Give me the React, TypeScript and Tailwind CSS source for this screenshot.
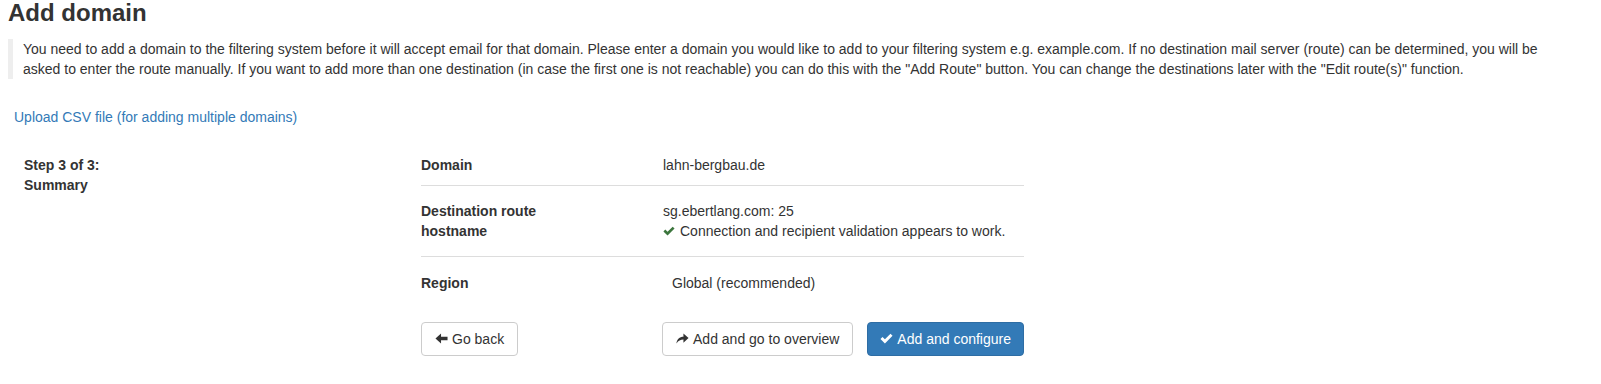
import React from "react";

const ArrowLeft = () => (
  <svg width="13" height="13" viewBox="0 0 14 14" className="inline-block">
    <path d="M0.5 7 L6.5 1.5 L6.5 5 L13.5 5 L13.5 9 L6.5 9 L6.5 12.5 Z" fill="#333" />
  </svg>
);

const ShareAlt = () => (
  <svg width="13" height="13" viewBox="0 0 14 14" className="inline-block">
    <path d="M0.5 12.5 C0.8 7.5 4 5 8 5 L8 1.5 L13.5 6.5 L8 11.5 L8 8.2 C5 8.2 2.5 9.3 0.5 12.5 Z" fill="#333" />
  </svg>
);

const Check = ({ color, size }: { color: string; size: number }) => (
  <svg width={size} height={size} viewBox="0 0 14 14" className="inline-block">
    <path d="M0.5 7.5 L2.7 5.3 L5.3 7.9 L11.3 1.9 L13.5 4.1 L5.3 12.3 Z" fill={color} />
  </svg>
);

export default function App() {
  return (
    <div className="bg-white pl-2 pr-2 font-['Liberation_Sans',Arial,sans-serif] text-[14px] leading-5 text-[#333]">
      <h3 className="m-0 text-[24px] font-bold leading-[1.1] text-[#333]">Add domain</h3>
      <blockquote className="mt-[12.6px] border-l-[5px] border-[#eee] pl-[10px] pr-[20px]">
        You need to add a domain to the filtering system before it will accept email for that domain. Please enter a
        domain you would like to add to your filtering system e.g. example.com. If no destination mail server (route)
        can be determined, you will be asked to enter the route manually. If you want to add more than one destination
        (in case the first one is not reachable) you can do this with the "Add Route" button. You can change the
        destinations later with the "Edit route(s)" function.
      </blockquote>
      <div className="mt-[28px] pl-[6px]">
        <a className="text-[#337ab7] no-underline" href="#">
          Upload CSV file (for adding multiple domains)
        </a>
      </div>
      <div className="mt-[28px] flex">
        <div className="w-[413px] shrink-0 pl-[16px] font-bold">
          <div>Step 3 of 3:</div>
          <div>Summary</div>
        </div>
        <div className="w-[603px]">
          <div className="flex border-b border-[#ddd] pb-[10px]">
            <div className="w-[242px] font-bold">Domain</div>
            <div>lahn-bergbau.de</div>
          </div>
          <div className="flex border-b border-[#ddd] pt-[15px] pb-[15px]">
            <div className="w-[242px] font-bold">
              Destination route
              <br />
              hostname
            </div>
            <div>
              <div>sg.ebertlang.com: 25</div>
              <div className="flex items-center gap-[5px]">
                <Check color="#3c763d" size={12} />
                <span>Connection and recipient validation appears to work.</span>
              </div>
            </div>
          </div>
          <div className="flex pt-[16px]">
            <div className="w-[242px] font-bold">Region</div>
            <div className="pl-[9px]">Global (recommended)</div>
          </div>
          <div className="mt-[29px] flex items-center justify-between">
            <button className="flex h-[34px] items-center gap-[4px] rounded-[4px] border border-[#ccc] bg-white px-[13px] text-[14px] text-[#333]">
              <ArrowLeft />
              <span>Go back</span>
            </button>
            <div className="flex gap-[14px]">
              <button className="flex h-[34px] items-center gap-[4px] rounded-[4px] border border-[#ccc] bg-white px-[13px] text-[14px] text-[#333]">
                <ShareAlt />
                <span>Add and go to overview</span>
              </button>
              <button className="flex h-[34px] items-center gap-[4px] rounded-[4px] border border-[#2e6da4] bg-[#337ab7] px-[12px] text-[14px] text-white">
                <Check color="#fff" size={13} />
                <span>Add and configure</span>
              </button>
            </div>
          </div>
        </div>
      </div>
    </div>
  );
}
